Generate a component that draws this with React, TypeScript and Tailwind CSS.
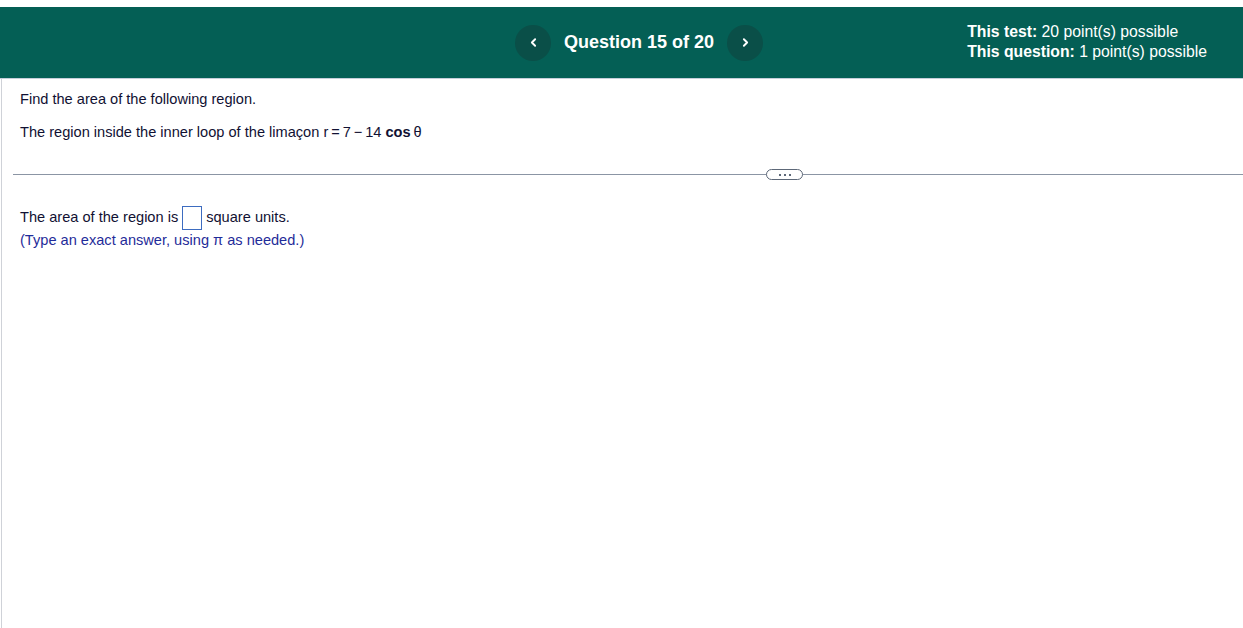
import { ChevronLeft, ChevronRight } from 'lucide-react';

export default function App() {
  return (
    <div className="min-h-[628px] bg-white pt-[7px] font-['Liberation_Sans',Arial,sans-serif]">
      <header className="flex h-[71px] items-center bg-[#045f55] text-white">
        <div className="flex items-center pl-[515px]">
          <button className="flex h-9 w-9 items-center justify-center rounded-full bg-[#0a4f48]">
            <ChevronLeft size={13} strokeWidth={3.5} />
          </button>
          <h1 className="mx-[13px] text-[18px] font-bold">Question 15 of 20</h1>
          <button className="flex h-9 w-9 items-center justify-center rounded-full bg-[#0a4f48]">
            <ChevronRight size={13} strokeWidth={3.5} />
          </button>
        </div>
        <div className="mb-[2px] ml-auto pr-[36px] text-[15.75px] leading-[20px]">
          <div>
            <span className="font-bold">This test:</span> 20 point(s) possible
          </div>
          <div>
            <span className="font-bold">This question:</span> 1 point(s) possible
          </div>
        </div>
      </header>
      <div className="h-px bg-[#c5ceda]" />
      <main className="ml-px min-h-[549px] border-l border-[#cfd2d8] pt-[11px]">
        <div className="pl-[18px] text-[14.6px] text-[#111133]">
          <p className="leading-[18px]">Find the area of the following region.</p>
          <p className="mt-[15px] leading-[18px]">
            The region inside the inner loop of the limaçon r{'\u2009'}={'\u2009'}7{'\u2009'}−{'\u2009'}14{' '}
            <b>cos</b>{'\u2009'}θ
          </p>
        </div>
        <div className="relative mt-[33px] ml-[11px] h-px bg-[#8b95a4]">
          <div className="absolute left-[753px] top-[-5px] flex h-[11px] w-[37px] items-center justify-center gap-[3px] rounded-full border border-[#5d6878] bg-white">
            <span className="h-[2px] w-[2px] bg-[#5d6878]" />
            <span className="h-[2px] w-[2px] bg-[#5d6878]" />
            <span className="h-[2px] w-[2px] bg-[#5d6878]" />
          </div>
        </div>
        <div className="mt-[31px] pl-[18px] text-[14.6px]">
          <p className="flex items-center text-[#111133]">
            The area of the region is
            <span className="mx-[4px] inline-block h-[24px] w-[20px] border border-[#3d6cc0]" />
            square units.
          </p>
          <p className="mt-[1px] leading-[18px] text-[#1f2c99]">(Type an exact answer, using π as needed.)</p>
        </div>
      </main>
    </div>
  );
}
